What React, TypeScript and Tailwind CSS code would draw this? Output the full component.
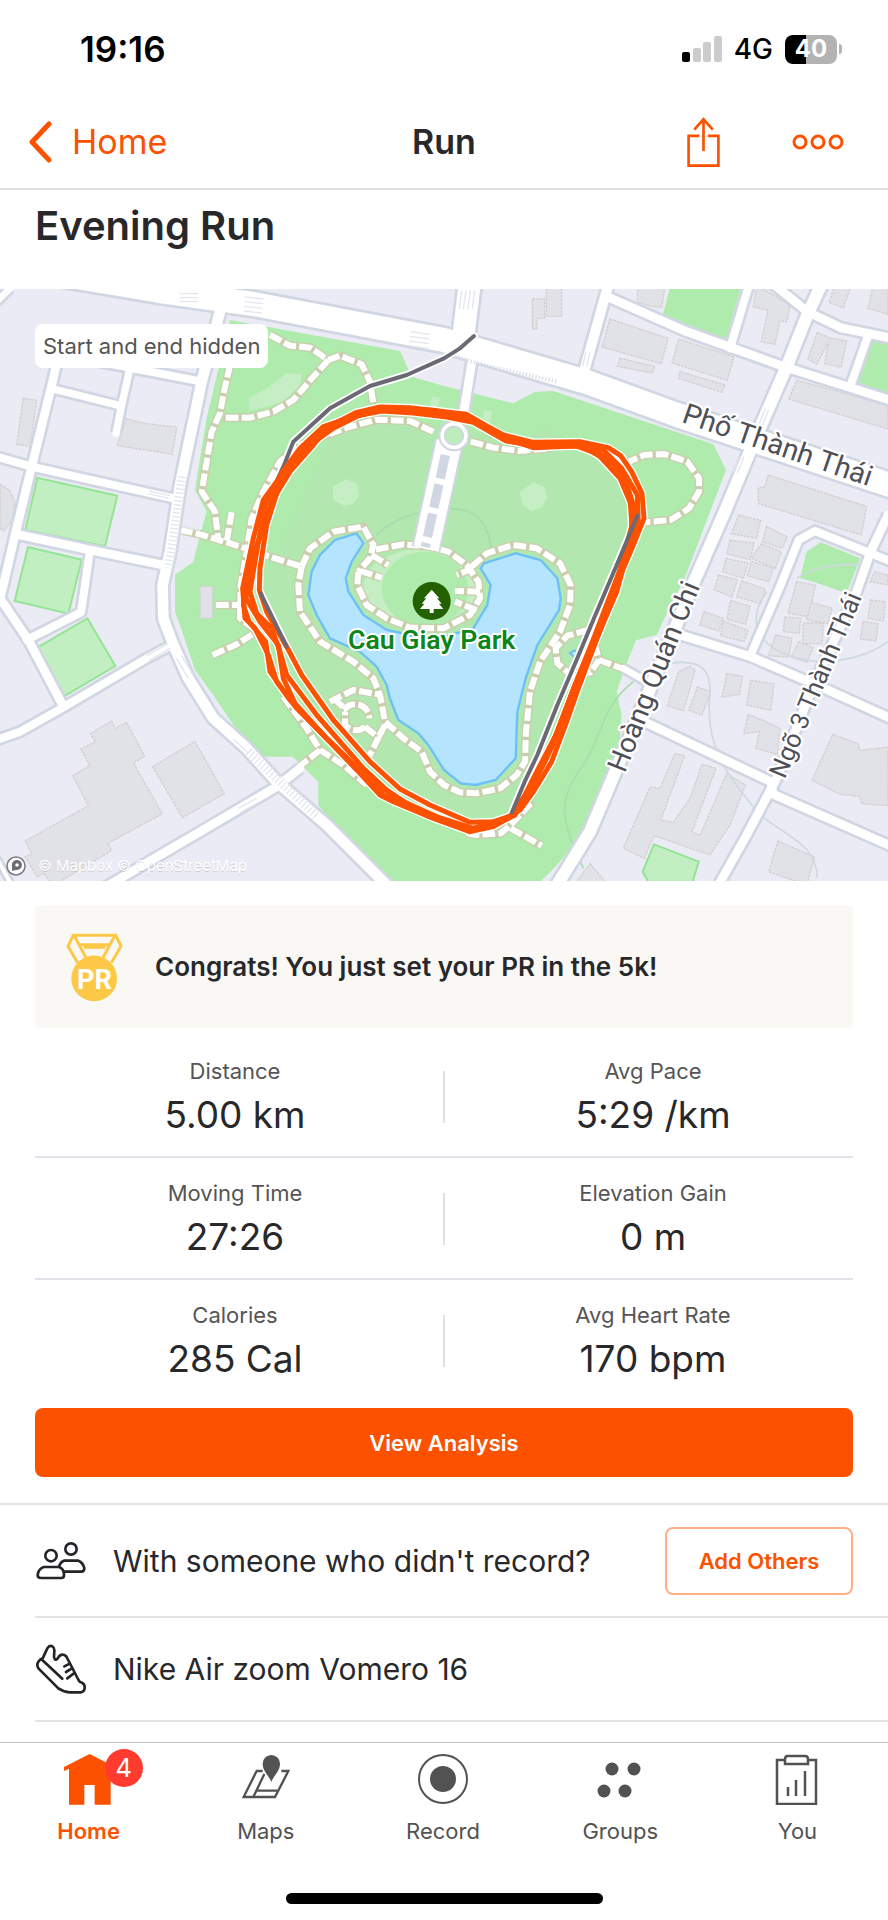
import React from 'react';

interface Road {
  d: string;
  w: number;
}

const roads: Road[] = [
  { d: 'M-100 -80 L480 18 L760 57 L1332 165 L1762 292 L2032 390 L2700 610', w: 72 },
  { d: 'M665 60 L605 290 L540 600 L510 800 L488 900 L490 1000 L520 1080 L565 1180 L640 1300 L740 1390 L830 1490 L980 1620 L1170 1810', w: 32 },
  { d: 'M180 190 L160 280 L95 545 L45 750 L10 900 L0 940 L85 1065 L185 1255', w: 26 },
  { d: 'M-20 512 L95 545 L520 640', w: 24 },
  { d: 'M160 312 L360 362', w: 22 },
  { d: 'M392 240 L365 360 L348 445', w: 22 },
  { d: 'M170 205 L400 250 L605 290', w: 24 },
  { d: 'M50 748 L270 795 L500 842', w: 26 },
  { d: 'M270 795 L255 900 L243 982 L80 1065', w: 24 },
  { d: 'M-20 1368 L60 1340 L185 1270 L440 1120 L515 1080', w: 24 },
  { d: 'M310 1810 L600 1640 L830 1505 L900 1450', w: 26 },
  { d: 'M-20 1700 L40 1810', w: 12 },
  { d: 'M-20 60 L30 10', w: 20 },
  { d: 'M1410 -10 L1388 170', w: 66 },
  { d: 'M1418 215 L1390 390', w: 26 },
  { d: 'M1828 -10 L1808 60 L1752 260', w: 30 },
  { d: 'M1822 35 L2060 140 L2352 245 L2700 355', w: 26 },
  { d: 'M2250 -10 L2190 190', w: 24 },
  { d: 'M2468 -10 L2422 90 L2362 240 L2262 470 L2170 690 L2082 890 L1980 1140 L1850 1450 L1770 1640 L1665 1810', w: 36 },
  { d: 'M2305 -15 L2422 80 L2522 128 L2700 165', w: 26 },
  { d: 'M2605 150 L2552 300', w: 24 },
  { d: 'M2252 1110 L2342 900 L2396 765 L2445 738 L2612 805 L2700 840', w: 24 },
  { d: 'M2664 690 L2612 800 L2570 920 L2440 1200 L2330 1480 L2240 1650 L2150 1810', w: 26 },
  { d: 'M2042 1050 L2252 1115 L2472 1210 L2700 1313', w: 26 },
  { d: 'M1932 1310 L2312 1490 L2320 1528 L2700 1695', w: 26 },
  { d: 'M1870 1150 L1940 1190', w: 20 },
];

const footpaths: string[] = [
  'M810 150 L870 182 L930 188 L985 225 L1020 212 L1085 238 L1110 290 L1120 355',
  'M985 225 L940 275 L880 345 L820 380 L750 398 L670 398',
  'M690 240 L672 320 L660 385 L635 440 L620 530 L605 620 L645 680 L655 765',
  'M695 682 L680 770',
  'M540 735 L600 748 L690 775 L800 812 L905 845',
  'M1300 440 L1230 408 L1130 404 L1040 428 L900 480 L840 530 L790 620 L755 700 L740 800 L722 900 L720 1000 L760 1030',
  'M648 960 L720 960',
  'M638 1110 L710 1078 L770 1040',
  'M905 845 L895 900 L900 980 L960 1070 L1060 1130 L1120 1180 L1140 1230 L1155 1310 L1210 1360 L1265 1400 L1290 1460 L1332 1500 L1380 1522 L1430 1525 L1500 1510 L1550 1470 L1575 1430 L1578 1340 L1590 1220 L1620 1130 L1680 1040 L1710 960 L1712 900 L1680 835 L1610 790 L1540 780 L1460 805 L1410 850',
  'M905 845 L930 790 L1000 740 L1090 725 L1120 780 L1110 820 L1075 860',
  'M1075 860 L1072 900 L1100 960 L1160 1000 L1230 1028 L1330 1030 L1410 990 L1440 940 L1435 890 L1400 840 L1345 800 L1290 785 L1210 778 L1120 795',
  'M1115 810 L1165 840',
  'M1080 858 L1145 878',
  'M1440 920 L1365 918',
  'M1420 850 L1370 870',
  'M1430 975 L1365 950',
  'M990 1250 L1060 1215 L1135 1228',
  'M1000 1240 L1040 1275',
  'M1032 1275 A42 42 0 0 1 1108 1300 M1095 1325 A42 42 0 0 1 1035 1320 L1035 1280',
  'M1095 1325 L1135 1358 L1105 1420',
  'M1155 1320 L1135 1358',
  'M850 1235 L920 1330 L960 1395 L1030 1440 L1100 1500',
  'M960 1395 L885 1455',
  'M1877 535 L1932 510 L1992 507 L2062 530 L2097 580 L2097 620 L2067 670 L2012 705 L1932 712',
  'M1412 470 L1480 488 L1560 498 L1650 490',
  'M1800 1000 L1765 1035 L1702 1052 L1667 1090 L1672 1135 L1712 1170 L1772 1162 L1797 1125 L1780 1060',
  'M1797 1125 L1870 1152',
  'M1400 1645 L1432 1650 L1502 1645 L1532 1620 L1597 1550',
  'M1532 1630 L1625 1682',
];

const buildings: string[] = [
  'M70 340 L110 346 L90 484 L50 478 Z',
  'M380 402 L440 416 L530 426 L517 508 L432 494 L350 482 Z',
  'M0 598 L28 614 L44 650 L40 700 L12 738 L0 728 Z',
  'M335 1308 L345 1330 L380 1312 L434 1414 L400 1434 L487 1586 L323 1675 L335 1696 L180 1790 L150 1790 L132 1765 L112 1776 L75 1715 L96 1708 L76 1668 L265 1562 L218 1472 L270 1442 L242 1392 L287 1370 L270 1346 Z',
  'M585 1369 L673 1526 L547 1598 L458 1445 Z',
  'M600 904 L638 904 L638 1000 L600 1000 Z',
  'M1597 42 L1634 42 L1634 100 L1612 100 L1610 132 L1597 132 Z',
  'M1639 0 L1685 0 L1685 94 L1639 94 Z',
  'M1914 0 L1996 0 L1985 68 L1945 62 L1912 50 Z',
  'M1830 102 L2004 160 L1984 236 L1806 186 Z',
  'M1860 220 L1965 244 L1956 264 L1852 244 Z',
  'M2036 162 L2202 216 L2182 286 L2016 234 Z',
  'M2040 260 L2176 300 L2166 322 L2036 280 Z',
  'M2270 0 L2370 60 L2360 110 L2340 108 L2324 178 L2284 170 L2304 76 L2260 66 Z',
  'M2505 0 L2550 12 L2530 68 L2487 52 Z',
  'M2620 0 L2664 0 L2664 88 L2604 70 Z',
  'M2452 142 L2486 158 L2540 168 L2524 246 L2474 236 L2486 170 L2450 238 L2424 222 Z',
  'M2390 286 L2664 360 L2664 432 L2366 342 Z',
  'M2304 570 L2600 664 L2584 750 L2276 656 L2274 610 L2296 604 Z',
  'M2216 690 L2282 706 L2270 760 L2194 746 Z',
  'M2190 766 L2262 774 L2250 824 L2180 806 Z',
  'M2178 820 L2244 834 L2230 880 L2168 860 Z',
  'M2300 724 L2362 756 L2346 790 L2288 770 Z',
  'M2284 776 L2344 800 L2326 850 L2254 820 Z',
  'M2254 830 L2320 850 L2306 890 L2242 872 Z',
  'M2156 870 L2212 884 L2196 936 L2142 914 Z',
  'M2226 888 L2296 912 L2282 956 L2210 936 Z',
  'M2192 946 L2250 964 L2236 1018 L2180 1002 Z',
  'M2112 980 L2170 1000 L2156 1038 L2100 1020 Z',
  'M2170 1008 L2244 1036 L2232 1070 L2162 1052 Z',
  'M2390 890 L2446 900 L2426 996 L2364 984 Z',
  'M2434 952 L2496 970 L2484 1016 L2420 1004 Z',
  'M2354 996 L2402 1000 L2398 1044 L2350 1040 Z',
  'M2410 1014 L2470 1014 L2466 1076 L2408 1076 Z',
  'M2326 1050 L2376 1060 L2366 1116 L2306 1112 Z',
  'M2396 1070 L2440 1088 L2420 1132 L2374 1116 Z',
  'M2068 1144 L2086 1156 L2050 1278 L2002 1262 L2036 1160 Z',
  'M2092 1206 L2132 1220 L2106 1290 L2066 1276 Z',
  'M2180 1166 L2228 1174 L2218 1228 L2166 1236 Z',
  'M2252 1186 L2322 1196 L2312 1276 L2240 1260 Z',
  'M2244 1288 L2290 1306 L2340 1330 L2332 1408 L2268 1390 L2278 1340 L2232 1346 Z',
  'M2024 1406 L2054 1412 L1982 1606 L2020 1612 L2070 1540 L2106 1438 L2148 1450 L2076 1640 L2100 1652 L2180 1466 L2236 1500 L2190 1620 L2130 1710 L1962 1652 L1932 1720 L1870 1690 L1950 1506 L1980 1510 Z',
  'M2498 1348 L2574 1376 L2580 1396 L2664 1386 L2664 1562 L2586 1556 L2578 1534 L2520 1528 L2436 1486 Z',
  'M2334 1668 L2444 1716 L2420 1800 L2306 1760 Z',
  'M1770 1736 L1816 1790 L1730 1790 Z',
  'M2624 860 L2664 870 L2664 900 L2610 890 Z',
  'M2612 945 L2656 950 L2650 1008 L2604 1000 Z',
  'M2588 1010 L2634 1016 L2628 1068 L2582 1062 Z',
];

const playingFields: string[] = [
  'M112 578 L352 632 L315 784 L76 735 Z',
  'M84 786 L245 824 L205 986 L44 948 Z',
  'M262 1000 L346 1143 L192 1234 L108 1090 Z',
  'M1962 1678 L2096 1730 L2072 1810 L1950 1800 L1928 1760 Z',
];

const routeLaps: string[] = [
  'M1000 418 L1070 382 L1140 366 L1230 368 L1332 380 L1400 388 L1455 420 L1510 450 L1600 472 L1740 470 L1825 488 L1862 512 L1895 560 L1926 625 L1932 700 L1900 780 L1868 855 L1850 920 L1806 1020 L1765 1130 L1735 1210 L1700 1310 L1655 1430 L1600 1520 L1560 1575 L1500 1610 L1410 1612 L1290 1560 L1200 1512 L1110 1430 L1000 1305 L905 1170 L860 1085 L800 980 L778 915 L780 850 L800 720 L835 610 L900 510 Z',
  'M970 425 L1060 395 L1145 378 L1240 384 L1340 396 L1420 412 L1515 466 L1615 486 L1760 480 L1810 495 L1865 550 L1912 630 L1915 715 L1880 810 L1845 930 L1795 1050 L1735 1190 L1678 1330 L1600 1480 L1545 1590 L1495 1615 L1420 1635 L1250 1575 L1160 1515 L1090 1450 L950 1290 L860 1170 L840 1100 L815 1030 L770 985 L750 920 L770 800 L795 660 L845 565 L900 490 Z',
  'M1000 430 L1075 392 L1150 374 L1250 374 L1332 384 L1405 400 L1520 462 L1600 488 L1735 482 L1790 500 L1850 545 L1890 640 L1896 720 L1862 850 L1820 960 L1770 1090 L1725 1200 L1668 1350 L1600 1500 L1545 1588 L1480 1625 L1410 1640 L1300 1600 L1180 1550 L1140 1530 L1080 1465 L950 1330 L870 1245 L810 1160 L797 1070 L747 1010 L730 960 L745 860 L800 690 L850 580 L930 480 Z',
  'M990 420 L1080 384 L1160 368 L1300 376 L1400 394 L1500 456 L1590 478 L1720 480 L1830 520 L1878 590 L1900 660 L1902 730 L1868 850 L1806 1010 L1742 1180 L1690 1310 L1635 1430 L1590 1510 L1530 1595 L1410 1640 L1200 1545 L1110 1485 L980 1360 L885 1255 L850 1180 L835 1080 L780 1010 L738 940 L755 830 L815 650 L870 560 L940 480 Z',
  'M1010 412 L1090 380 L1150 368 L1332 388 L1410 402 L1520 468 L1620 482 L1750 484 L1800 515 L1860 580 L1894 660 L1895 730 L1855 870 L1786 1050 L1725 1200 L1660 1370 L1600 1490 L1540 1590 L1420 1630 L1260 1580 L1150 1530 L1080 1460 L890 1270 L830 1190 L805 1110 L765 1030 L735 1000 L728 910 L760 760 L790 645 L870 535 L970 430 Z',
];

const privateTrack: string[] = [
  'M1422 153 L1380 190 L1332 220 L1220 270 L1110 303 L990 370 L880 470 L850 545 L825 600',
  'M782 925 L860 1085',
  'M1912 692 L1846 850 L1782 1000 L1732 1120 L1672 1260 L1612 1410 L1574 1490 L1536 1582',
];

const streetLabels = [
  { text: 'Phố Thành Thái', x: 2042, y: 410, angle: 19, size: 86 },
  { text: 'Hoàng Quán Chi', x: 1874, y: 1466, angle: -68, size: 84 },
  { text: 'Ngõ 3 Thành Thái', x: 2354, y: 1484, angle: -67, size: 76 },
];

const RouteMap: React.FC = () => (
  <svg viewBox="0 12 2664 1776" className="block w-full" role="img" aria-label="Route map of Cau Giay Park">
    <rect x="0" y="0" width="2664" height="1800" fill="#ebebf5" />

    {/* Parks */}
    <g fill="#aeebac">
      <path d="M690 105 L810 127 L1200 198 L1235 275 L1332 303 L1540 355 L1605 320 L1660 318 L2140 478 L2178 555 L2050 890 L2012 960 L1970 1050 L1908 1066 L1876 1145 L1850 1220 L1865 1290 L1860 1360 L1822 1460 L1772 1600 L1732 1670 L1662 1750 L1610 1800 L1190 1800 L970 1580 L955 1560 L955 1490 L878 1415 L790 1415 L700 1320 L640 1230 L585 1155 L550 1050 L525 980 L525 870 L580 830 L600 750 L620 680 L585 615 L600 520 L620 400 Z" />
      <path d="M2012 0 L2225 0 L2178 162 L1988 92 Z" />
      <path d="M2622 155 L2664 168 L2664 325 L2572 292 Z" />
      <path d="M2462 772 L2580 820 L2540 925 L2440 890 L2400 880 L2420 800 Z" />
    </g>
    <path d="M1000 440 L1140 405 L1380 420 L1540 480 L1640 430 L1870 560 L1890 720 L1700 1200 L1540 1560 L1400 1610 L1200 1520 L820 1080 L790 900 Z" fill="#b2e7b0" />
    <g fill="#c6eec5">
      <path d="M745 340 L800 310 L860 264 L905 268 L900 300 L850 350 L750 378 Z" />
      <path d="M1038 582 L1072 596 L1078 630 L1060 658 L1030 662 L1000 644 L998 606 Z" />
      <path d="M1600 592 L1632 604 L1642 636 L1624 668 L1592 678 L1566 658 L1560 620 Z" />
      <path d="M1452 375 L1476 378 L1470 418 L1446 414 Z" />
      <path d="M1296 334 L1320 338 L1314 370 L1290 366 Z" />
    </g>

    {/* Lake */}
    <path
      d="M1070 745 L1090 775 L1055 830 L1037 880 L1045 920 L1090 990 L1160 1035 L1300 1065 L1420 1030 L1462 960 L1472 900 L1442 850 L1452 835 L1547 805 L1622 825 L1672 880 L1682 940 L1677 975 L1612 1080 L1577 1180 L1552 1280 L1547 1420 L1487 1485 L1427 1500 L1382 1495 L1332 1455 L1285 1380 L1255 1345 L1195 1305 L1170 1240 L1160 1200 L1130 1145 L1080 1100 L990 1060 L950 990 L925 930 L935 860 L960 810 L1005 765 Z"
      fill="#b5e4ff"
      stroke="#6cc0f7"
      strokeWidth="7"
    />
    <path d="M1710 1104 L1724 1096 L1738 1108 L1728 1122 Z" fill="#b5e4ff" stroke="#6cc0f7" strokeWidth="6" />
    <ellipse cx="1262" cy="905" rx="172" ry="112" fill="#c6eec5" />
    <ellipse cx="1275" cy="912" rx="130" ry="112" fill="#aeebac" />

    {/* Buildings and playing fields */}
    <g fill="#e1e2e8" stroke="#d3cfcf" strokeWidth="4" strokeDasharray="8 3">
      {buildings.map((d) => (
        <path key={d} d={d} />
      ))}
    </g>
    <g fill="#c1efc1" stroke="#95e495" strokeWidth="6">
      {playingFields.map((d) => (
        <path key={d} d={d} />
      ))}
    </g>

    {/* Unpaved tracks */}
    <g fill="none" stroke="#cddadd" strokeWidth="5">
      <path d="M1900 1190 C1800 1270 1810 1350 1750 1440 C1670 1550 1680 1600 1750 1750" stroke="#a8dcae" />
      <path d="M1130 750 C1160 720 1210 690 1265 684" stroke="#a8dcae" />
      <path d="M1350 672 C1430 665 1470 720 1475 810" stroke="#a8dcae" />
      <path d="M2010 1135 C2110 1120 2140 1160 2128 1250 C2120 1400 2190 1480 2280 1590 C2370 1660 2450 1680 2452 1780" />
      <path d="M2300 920 C2230 1020 2280 1110 2450 1130 C2560 1130 2620 1100 2664 1070" />
      <path d="M2390 880 C2450 840 2500 840 2590 838" />
    </g>

    {/* Footpaths */}
    <g fill="none" strokeLinejoin="round">
      <g stroke="#c9cfae" strokeWidth="26">
        {footpaths.map((d) => (
          <path key={d} d={d} />
        ))}
      </g>
      <g stroke="#ffffff" strokeWidth="18" strokeDasharray="38 10">
        {footpaths.map((d) => (
          <path key={d} d={d} />
        ))}
      </g>
    </g>

    {/* Roads */}
    <g fill="none" strokeLinejoin="round">
      <g stroke="#d0d6e2">
        {roads.map((road) => (
          <path key={road.d} d={road.d} strokeWidth={road.w + 16} />
        ))}
      </g>
      <g stroke="#ffffff" strokeLinecap="round">
        {roads.map((road) => (
          <path key={road.d} d={road.d} strokeWidth={road.w} />
        ))}
      </g>
      <g stroke="#e4e6ef">
        <path d="M548 575 L508 850" strokeWidth="30" strokeDasharray="4 8" />
        <path d="M745 1400 L950 1590" strokeWidth="30" strokeDasharray="4 8" />
        <path d="M538 50 L592 50 M538 38 L594 38 M538 26 L594 26 M734 36 L792 42 M733 50 L790 56 M732 64 L788 70 M731 78 L786 84 M1232 140 L1290 148 M1230 154 L1288 162 M1228 168 L1286 176 M1226 182 L1284 190" strokeWidth="4" />
        <path d="M1385 16 L1378 72 M1398 16 L1390 72 M1411 16 L1404 72 M1424 16 L1417 72" strokeWidth="4" />
        <path d="M530 1120 L565 1180 M545 1112 L580 1172 M700 1362 L745 1405 M440 1112 L505 1076 M448 1126 L510 1090 M715 1570 L770 1540 M722 1582 L776 1552" strokeWidth="4" />
        <path d="M1758 200 L1748 244 M1770 200 L1760 244 M2296 370 L2276 420 M2306 374 L2286 424 M2220 512 L2200 560 M2232 516 L2212 564" strokeWidth="4" />
        <path d="M448 618 L510 632 M446 626 L506 640 M545 724 L600 736" strokeWidth="4" />
      </g>
      <path d="M1335 207 L1470 245 L1670 290" stroke="#d9dce8" strokeWidth="12" strokeDasharray="4 6" />
    </g>

    {/* Park promenade */}
    <path d="M1348 470 L1278 792" stroke="#d0d6e2" strokeWidth="88" fill="none" />
    <path d="M1348 470 L1278 792" stroke="#ffffff" strokeWidth="76" fill="none" />
    <path d="M1336 510 L1276 786" stroke="#d0d6e2" strokeWidth="28" strokeDasharray="72 18" fill="none" />
    <circle cx="1362" cy="452" r="44" fill="#ffffff" stroke="#d0d6e2" strokeWidth="6" />
    <circle cx="1362" cy="452" r="28" fill="#bdecbd" stroke="#d0d6e2" strokeWidth="5" />

    {/* Recorded route */}
    <g fill="none" strokeLinejoin="round" strokeLinecap="round">
      <g stroke="#ffffff" strokeWidth="23">
        {privateTrack.map((d) => (
          <path key={d} d={d} />
        ))}
        {routeLaps.map((d) => (
          <path key={d} d={d} />
        ))}
      </g>
      <path d={privateTrack[0]} stroke="#6b6974" strokeWidth="12" />
      <g stroke="#fc5200" strokeWidth="15">
        {routeLaps.map((d) => (
          <path key={d} d={d} />
        ))}
      </g>
      <g stroke="#6b6974" strokeWidth="12">
        <path d={privateTrack[1]} />
        <path d={privateTrack[2]} />
      </g>
    </g>

    {/* Park marker */}
    <circle cx="1295" cy="948" r="57" fill="#236100" />
    <path d="M1295 914 L1318 940 L1311 940 L1325 956 L1317 956 L1330 972 L1301 972 L1301 984 L1289 984 L1289 972 L1260 972 L1273 956 L1265 956 L1279 940 L1272 940 Z" fill="#ffffff" />

    {/* Labels */}
    <g className="font-[Roboto,sans-serif]" paintOrder="stroke" strokeLinejoin="round">
      <text x="1295" y="1092" textAnchor="middle" fontSize="80" fontWeight="600" fill="#0b861a" stroke="#ffffff" strokeWidth="12">
        Cau Giay Park
      </text>
      {streetLabels.map((label) => (
        <text
          key={label.text}
          x={label.x}
          y={label.y}
          fontSize={label.size}
          fill="#4f4f57"
          stroke="#ffffff"
          strokeWidth="14"
          transform={`rotate(${label.angle} ${label.x} ${label.y})`}
        >
          {label.text}
        </text>
      ))}
    </g>
  </svg>
);

const StatusBar: React.FC = () => (
  <div className="flex items-start justify-between pt-7 pr-[46px] pb-6 pl-20 text-black">
    <span className="text-[35px] leading-[42px] font-semibold">19:16</span>
    <div className="flex h-[42px] items-center gap-3">
      <svg viewBox="0 0 40 26" className="h-[26px] w-10">
        <rect x="0" y="16" width="8" height="10" rx="2" fill="#000000" />
        <rect x="11" y="12" width="8" height="14" rx="2" fill="#cccccc" />
        <rect x="21" y="6" width="8" height="20" rx="2" fill="#cccccc" />
        <rect x="32" y="0" width="8" height="26" rx="2" fill="#cccccc" />
      </svg>
      <span className="text-[28px] leading-8 font-medium">4G</span>
      <div className="flex items-center gap-[2px]">
        <span className="flex h-[29px] w-[52px] items-center justify-center rounded-lg bg-linear-to-r from-black from-40% to-[#b3b3b3] to-40% text-2xl leading-none font-bold text-white">
          40
        </span>
        <span className="h-[10px] w-[3px] rounded-r-full bg-[#b3b3b3]" />
      </div>
    </div>
  </div>
);

const Header: React.FC = () => (
  <header className="grid h-24 grid-cols-3 items-center border-b-2 border-[#e0e0e0] pt-[2px] pr-11 pl-7">
    <a href="#home" className="flex items-center gap-5 text-[34px] leading-10 text-[#fc5200]">
      <svg viewBox="0 0 24 42" className="h-[42px] w-6" fill="none" stroke="currentColor" strokeWidth="5" strokeLinecap="round" strokeLinejoin="round">
        <path d="M21 3 L4 21 L21 39" />
      </svg>
      Home
    </a>
    <span className="pl-4 text-center text-[34px] leading-10 font-semibold">Run</span>
    <div className="flex items-center justify-end gap-[70px] text-[#fc5200]">
      <button type="button" aria-label="Share">
        <svg viewBox="136 284 110 160" className="h-[53px] w-[37px]" fill="none" stroke="currentColor" strokeWidth="8">
          <path d="M178 344 H146 V434 H236 V344 H204" />
          <path d="M191 390 V294 M163 325 L191 294 L219 325" />
        </svg>
      </button>
      <button type="button" aria-label="More options">
        <svg viewBox="0 0 52 16" className="h-4 w-[52px]" fill="none" stroke="currentColor" strokeWidth="3">
          <circle cx="8" cy="8" r="6" />
          <circle cx="26" cy="8" r="6" />
          <circle cx="44" cy="8" r="6" />
        </svg>
      </button>
    </div>
  </header>
);

const MedalIcon: React.FC = () => (
  <svg viewBox="48 70 172 208" className="h-[69px] w-[57px]">
    <g fill="none" stroke="#fcc845" strokeWidth="9">
      <path d="M83 160 L54 110 L70 77 H198 L214 110 L185 160" />
      <path d="M74 80 L108 144 M194 80 L160 144 M90 105 H178 M102 113 H166" />
    </g>
    <circle cx="133" cy="207" r="69" fill="#fcc845" />
    <text x="134" y="239" textAnchor="middle" fontSize="82" className="font-['Liberation_Sans_Narrow','Roboto',sans-serif] font-bold" fill="#ffffff">
      PR
    </text>
  </svg>
);

const stats = [
  [
    { label: 'Distance', value: '5.00 km' },
    { label: 'Avg Pace', value: '5:29 /km' },
  ],
  [
    { label: 'Moving Time', value: '27:26' },
    { label: 'Elevation Gain', value: '0 m' },
  ],
  [
    { label: 'Calories', value: '285 Cal' },
    { label: 'Avg Heart Rate', value: '170 bpm' },
  ],
];

const Stat: React.FC<{ label: string; value: string }> = ({ label, value }) => (
  <div className="flex flex-1 flex-col items-center gap-1">
    <span className="text-[22px] leading-8 text-[#555555]">{label}</span>
    <span className="text-[37px] leading-[48px]">{value}</span>
  </div>
);

const PeopleIcon: React.FC = () => (
  <svg viewBox="104 60 156 120" className="h-10 w-[52px] shrink-0" fill="none" stroke="#242428" strokeWidth="8" strokeLinejoin="round">
    <circle cx="152" cy="104" r="17" />
    <circle cx="212" cy="84" r="17" />
    <path d="M130 138 H176 C188 142 191 152 191 162 Q191 171 183 171 H122 Q112 171 112 162 Q114 144 130 138 Z" />
    <path d="M176 138 Q180 122 192 119 H234 Q248 124 252 142 Q252 152 243 152 H191" />
  </svg>
);

const ShoeIcon: React.FC = () => (
  <svg viewBox="102 368 156 156" className="size-[52px] shrink-0" fill="none" stroke="#242428" strokeWidth="8" strokeLinejoin="round" strokeLinecap="round">
    <path d="M125 414 L139 384 Q145 374 154 378 Q161 382 160 392 L159 410 Q162 424 170 414 Q178 400 190 404 Q197 407 200 416 L231 476 Q235 486 243 487 Q252 491 251 504 Q249 516 238 516 H206 Q186 514 172 504 L113 445 Q105 434 113 423 Q118 416 125 414 Z" />
    <path d="M123 418 L184 475 M190 438 L206 430 M195 455 L213 444 M199 474 L220 458" />
  </svg>
);

const HomeIcon: React.FC = () => (
  <svg viewBox="186 700 156 156" className="size-[52px]">
    <path d="M189 742 L266 703 L342 742 L342 753 L329 747 V855 H281 V796 H250 V855 H204 V747 L189 754 Z" fill="#fc5200" />
  </svg>
);

const MapsIcon: React.FC = () => (
  <svg viewBox="722 700 156 156" className="size-[52px]" fill="none" stroke="#525252" strokeWidth="7">
    <path d="M790 754 H772 L733 832 H827 L867 754 H846" />
    <path d="M795 763 L762 832 M770 813 H834" />
    <path d="M816 787 C810 768 790 755 790 732 A26 26 0 0 1 842 732 C842 755 822 768 816 787 Z" fill="#525252" stroke="none" />
  </svg>
);

const RecordIcon: React.FC = () => (
  <svg viewBox="0 0 52 52" className="size-[52px]">
    <circle cx="26" cy="26" r="24" fill="none" stroke="#525252" strokeWidth="2" />
    <circle cx="26" cy="26" r="13" fill="#525252" />
  </svg>
);

const GroupsIcon: React.FC = () => (
  <svg viewBox="0 0 52 52" className="size-[52px]" fill="#525252">
    <circle cx="18" cy="16" r="6.5" />
    <circle cx="40" cy="16" r="6.5" />
    <circle cx="10" cy="38" r="6.5" />
    <circle cx="31" cy="38" r="6.5" />
  </svg>
);

const YouIcon: React.FC = () => (
  <svg viewBox="0 0 52 52" className="size-[52px]" fill="none" stroke="#525252" strokeWidth="2.5">
    <path d="M14 7 H6 V51 H45 V7 H37" />
    <path d="M14 11 V6 Q14 3 17 3 H34 Q37 3 37 6 V11 H14 Z" />
    <path d="M17 34 V43 M25 27 V43 M34 18 V43" />
  </svg>
);

const tabs = [
  { name: 'Home', icon: <HomeIcon />, active: true, badge: 4 },
  { name: 'Maps', icon: <MapsIcon /> },
  { name: 'Record', icon: <RecordIcon /> },
  { name: 'Groups', icon: <GroupsIcon /> },
  { name: 'You', icon: <YouIcon /> },
];

const TabBar: React.FC = () => (
  <footer className="mt-auto border-t border-[#c4c4c4] bg-white">
    <nav className="grid grid-cols-5 pt-[10px] pr-[2px]">
      {tabs.map((tab) => (
        <a
          key={tab.name}
          href={`#${tab.name.toLowerCase()}`}
          className={`flex flex-col items-center gap-3 text-[22px] leading-7 ${tab.active ? 'font-semibold text-[#fc5200]' : 'text-[#525252]'}`}
        >
          <span className="relative">
            {tab.icon}
            {tab.badge && (
              <span className="absolute -top-1 left-[42px] flex size-[38px] items-center justify-center rounded-full bg-[#ff3b30] text-[26px] leading-none font-normal text-white">
                {tab.badge}
              </span>
            )}
          </span>
          {tab.name}
        </a>
      ))}
    </nav>
    <div className="flex justify-center pt-12 pb-4">
      <div className="h-[11px] w-[317px] rounded-full bg-black" />
    </div>
  </footer>
);

const App: React.FC = () => {
  return (
    <div className="flex min-h-screen flex-col bg-white font-[Inter,sans-serif] text-[#28282b]">
      <StatusBar />
      <Header />

      <main>
        <h1 className="px-[35px] pt-[11px] pb-[38px] text-[40px] leading-[50px] font-semibold">Evening Run</h1>

        <section className="relative">
          <RouteMap />
          <span className="absolute top-[35px] left-[35px] rounded-lg bg-white px-2 py-1 text-[22px] leading-9 text-[#555555]">
            Start and end hidden
          </span>
          <div className="absolute bottom-[5px] left-[6px] flex items-center gap-3">
            <svg viewBox="0 0 20 20" className="size-5">
              <circle cx="10" cy="10" r="9" fill="#ffffff" stroke="#7a7a80" strokeWidth="1.5" />
              <path d="M6 15 V10 A5 5 0 1 1 11 14 Q9 14 6 15 Z" fill="#6b6b72" />
              <circle cx="11" cy="9" r="1.8" fill="#ffffff" />
            </svg>
            <span className="text-[15px] leading-5 text-white text-shadow-2xs">© Mapbox © OpenStreetMap</span>
          </div>
        </section>

        <section className="px-[35px] pt-[25px] pb-[26px]">
          <div className="flex h-[122px] items-center gap-8 rounded-sm bg-[#f9f8f5] px-[31px]">
            <MedalIcon />
            <p className="text-[26px] leading-8 font-semibold">Congrats! You just set your PR in the 5k!</p>
          </div>

          <div className="mt-2 divide-y-2 divide-[#e2e2ea]">
            {stats.map(([left, right]) => (
              <div key={left.label} className="flex items-center gap-2 pt-[19px] pb-[17px]">
                <Stat label={left.label} value={left.value} />
                <div className="h-[52px] w-[2px] bg-[#e0e0e0]" />
                <Stat label={right.label} value={right.value} />
              </div>
            ))}
          </div>

          <button type="button" className="mt-2 h-[69px] w-full rounded-lg bg-[#fc5200] text-[22px] leading-7 font-semibold text-white">
            View Analysis
          </button>
        </section>

        <section className="border-t-2 border-[#e4e4e4] pb-5 pl-[35px]">
          <div className="flex h-[113px] items-center gap-[26px] border-b-2 border-[#e4e4e4] pr-[35px]">
            <PeopleIcon />
            <span className="flex-1 text-[30px] leading-10">With someone who didn't record?</span>
            <button type="button" className="h-[68px] w-[188px] rounded-lg border-2 border-[#feaf88] text-[22px] leading-7 font-semibold text-[#fc5200]">
              Add Others
            </button>
          </div>
          <div className="flex h-[104px] items-center gap-[26px] border-b-2 border-[#e4e4e4]">
            <ShoeIcon />
            <span className="text-[30px] leading-10">Nike Air zoom Vomero 16</span>
          </div>
        </section>
      </main>

      <TabBar />
    </div>
  );
};

export default App;
